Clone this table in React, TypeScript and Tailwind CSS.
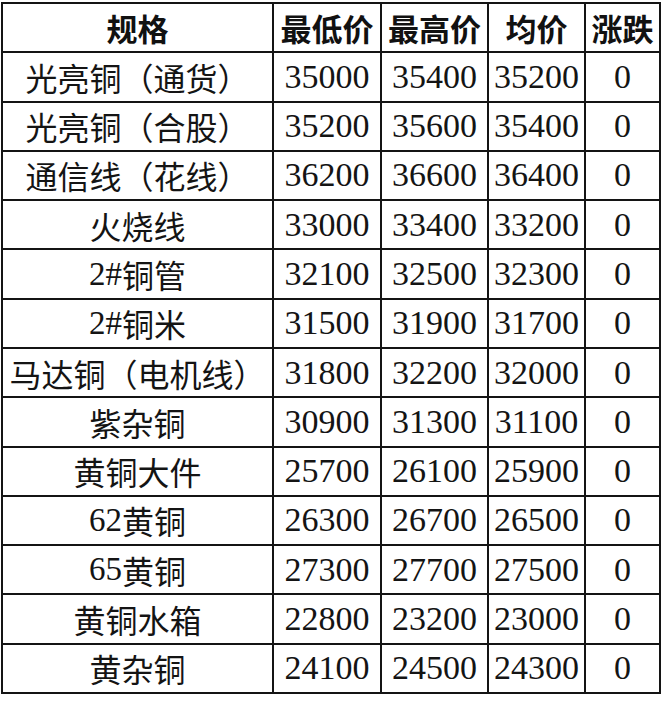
import React from "react";

type Row = { pre: string; name: string; vals: string[] };

const rows: Row[] = [
  { pre: "", name: "光亮铜（通货）", vals: ["35000", "35400", "35200", "0"] },
  { pre: "", name: "光亮铜（合股）", vals: ["35200", "35600", "35400", "0"] },
  { pre: "", name: "通信线（花线）", vals: ["36200", "36600", "36400", "0"] },
  { pre: "", name: "火烧线", vals: ["33000", "33400", "33200", "0"] },
  { pre: "2#", name: "铜管", vals: ["32100", "32500", "32300", "0"] },
  { pre: "2#", name: "铜米", vals: ["31500", "31900", "31700", "0"] },
  { pre: "", name: "马达铜（电机线）", vals: ["31800", "32200", "32000", "0"] },
  { pre: "", name: "紫杂铜", vals: ["30900", "31300", "31100", "0"] },
  { pre: "", name: "黄铜大件", vals: ["25700", "26100", "25900", "0"] },
  { pre: "62", name: "黄铜", vals: ["26300", "26700", "26500", "0"] },
  { pre: "65", name: "黄铜", vals: ["27300", "27700", "27500", "0"] },
  { pre: "", name: "黄铜水箱", vals: ["22800", "23200", "23000", "0"] },
  { pre: "", name: "黄杂铜", vals: ["24100", "24500", "24300", "0"] },
];

const headers = ["规格", "最低价", "最高价", "均价", "涨跌"];

export default function App() {
  return (
    <div className="w-[662px] h-[704px] bg-white">
      <div className="ml-[1px] mt-[2px] w-[660px] h-[692px] bg-[#141414] p-[2px] grid grid-cols-[269px_106px_105px_95px_73px] grid-rows-[repeat(14,minmax(0,1fr))] gap-[2px]">
        {headers.map((h) => (
          <div
            key={h}
            className="bg-white flex items-center justify-center overflow-hidden font-['Noto_Sans_CJK_SC'] font-bold text-[31px] text-[#111] leading-none whitespace-nowrap"
          >
            {h}
          </div>
        ))}
        {rows.map((r) => (
          <React.Fragment key={r.pre + r.name}>
            <div className="bg-white flex items-center justify-center overflow-visible text-[#141414] leading-none whitespace-nowrap">
              {r.pre && <span className="font-['Liberation_Serif'] text-[33px]">{r.pre}</span>}
              <span className="font-['Noto_Sans_CJK_SC'] text-[32px]">{r.name}</span>
            </div>
            {r.vals.map((v, i) => (
              <div
                key={i}
                className="bg-white flex items-center justify-center overflow-visible font-['Liberation_Serif'] text-[34px] text-[#141414] leading-none whitespace-nowrap"
              >
                {v}
              </div>
            ))}
          </React.Fragment>
        ))}
      </div>
    </div>
  );
}
